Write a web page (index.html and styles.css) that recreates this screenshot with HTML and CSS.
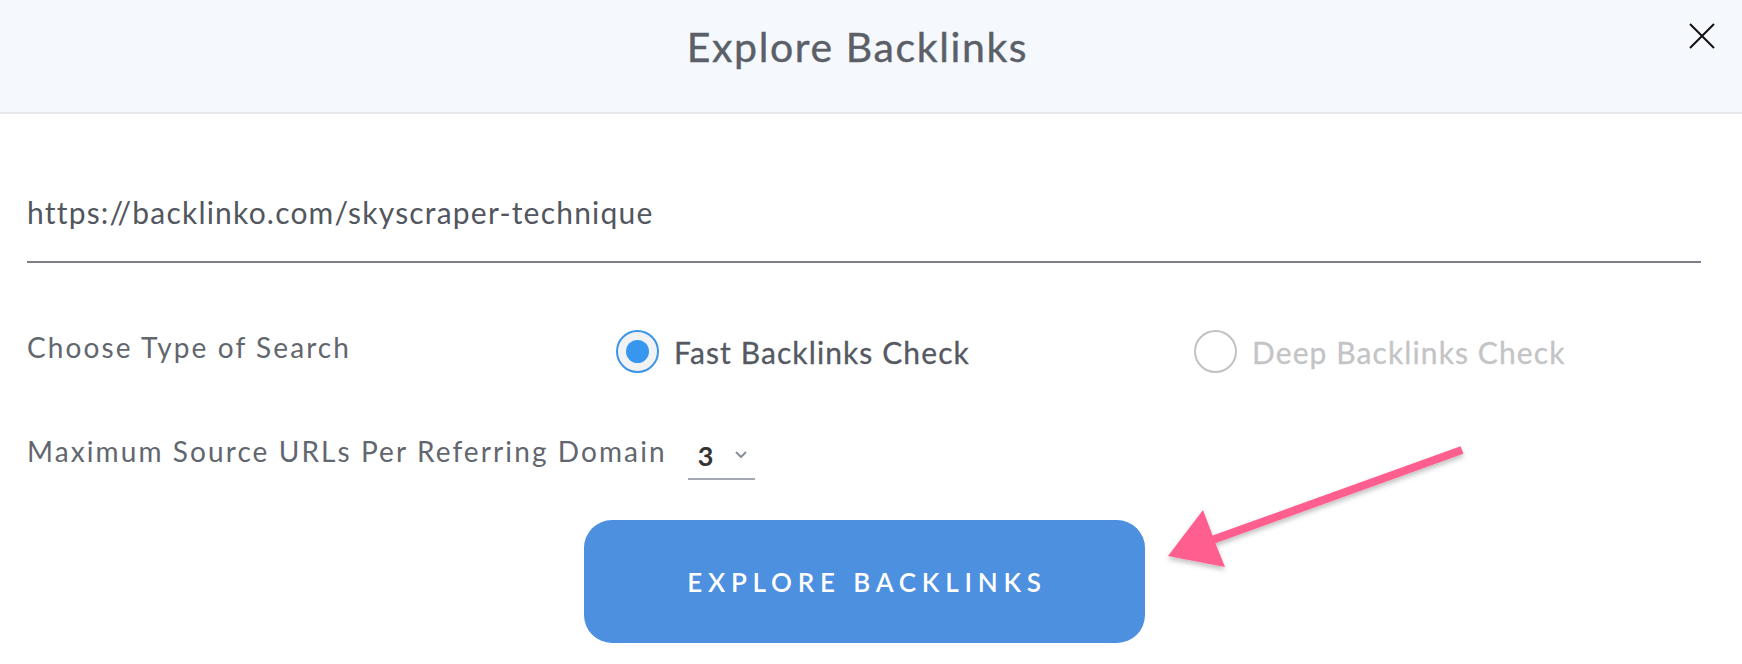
FILE: index.html
```html
<!DOCTYPE html>
<html lang="en">
<head>
<meta charset="UTF-8">
<meta name="viewport" content="width=device-width, initial-scale=1.0">
<link rel="stylesheet" href="styles.css">
</head>
<body>

<div class="modal">
  <!-- Header -->
  <div class="modal-header">
    <span></span>
    <h1 class="modal-title">Explore Backlinks</h1>
    <button class="close-btn" aria-label="Close">
      <svg width="26" height="26" viewBox="0 0 26 26"><path d="M1 1 L25 25 M25 1 L1 25" stroke="#111" stroke-width="2" fill="none"/></svg>
    </button>
  </div>

  <div class="modal-body">
    <div class="url-field">https://backlinko.com/skyscraper-technique</div>

    <div class="search-type">
      <span class="label">Choose Type of Search</span>
      <label class="radio checked"><span class="radio-circle"></span>Fast Backlinks Check</label>
      <label class="radio disabled"><span class="radio-circle"></span>Deep Backlinks Check</label>
    </div>

    <div class="max-urls">
      <span class="label">Maximum Source URLs Per Referring Domain</span>
      <div class="select">
        <span class="select-value">3</span>
        <svg width="12" height="8" viewBox="0 0 12 8"><path d="M1 1 L6 6 L11 1" stroke="#8a8f9a" stroke-width="2" fill="none"/></svg>
      </div>
    </div>

    <div class="actions">
      <button class="explore-btn">EXPLORE BACKLINKS</button>
    </div>
  </div>

  <!-- annotation arrow -->
  <svg class="arrow" width="330" height="160" viewBox="0 0 330 160">
    <defs>
      <filter id="shadow" x="-10%" y="-10%" width="120%" height="130%">
        <feDropShadow dx="0" dy="3" stdDeviation="2.5" flood-color="#000" flood-opacity="0.25"/>
      </filter>
    </defs>
    <polygon filter="url(#shadow)" fill="#ff5f8f" points="310.6,16.2 62.6,105.6 53,80 18,126 75,137 65.4,113.2 313.4,23.8"/>
  </svg>
</div>

</body>
</html>
```

FILE: styles.css
```css
body {
  margin: 0;
  background: #fff;
  font-family: Lato, "Open Sans", sans-serif;
}
.modal {
  position: relative;
  width: 1742px;
  height: 664px;
  overflow: hidden;
}
.modal-header {
  height: 112px;
  background-color: #f5f8fd;
  border-bottom: 2px solid #e5e7ea;
  display: grid;
  grid-template-columns: 1fr auto 1fr;
  align-items: center;
  padding-right: 27px;
}
.modal-title {
  margin: 0;
  padding-bottom: 19px;
  font-size: 41px;
  font-weight: 400;
  -webkit-text-stroke: 0.4px #5b5f68;
  color: #5b5f68;
  letter-spacing: 1.6px;
}
.close-btn {
  justify-self: end;
  align-self: start;
  margin-top: 23px;
  background: none;
  border: none;
  padding: 0;
  width: 26px;
  height: 26px;
  cursor: pointer;
}
.modal-body {
  padding: 0 41px 0 27px;
}
.url-field {
  margin-top: 80px;
  padding-bottom: 31px;
  border-bottom: 2px solid #7d808b;
  font-size: 30px;
  letter-spacing: 1.2px;
  color: #52565e;
  line-height: 36px;
}
.label {
  font-size: 28px;
  letter-spacing: 2.1px;
  color: #62666e;
}
.search-type {
  display: grid;
  grid-template-columns: 589px 578px auto;
  align-items: center;
  margin-top: 67px;
}
.search-type .label {
  margin-top: -10px;
}
.radio {
  display: flex;
  align-items: center;
  gap: 15px;
  font-size: 30px;
  font-weight: 400;
  -webkit-text-stroke: 0.3px #555962;
  letter-spacing: 1.1px;
  color: #555962;
}
.radio-circle {
  width: 39px;
  height: 39px;
  border-radius: 50%;
  border: 2px solid #c2c2c2;
  box-sizing: content-box;
  display: flex;
  align-items: center;
  justify-content: center;
}
.radio.checked .radio-circle {
  border-color: #3d95ea;
  background: #f1f2f4;
}
.radio.checked .radio-circle::after {
  content: "";
  width: 23px;
  height: 23px;
  border-radius: 50%;
  background: #3797ef;
}
.radio.disabled {
  color: #c4c4c6;
  -webkit-text-stroke: 0.3px #c4c4c6;
}
.max-urls {
  display: flex;
  align-items: center;
  margin-top: 49px;
}
.select {
  margin-left: 21px;
  width: 67px;
  height: 48px;
  border-bottom: 2px solid #a3a8b4;
  display: flex;
  align-items: center;
  justify-content: space-between;
  padding: 0 8px 0 10px;
  box-sizing: border-box;
  margin-top: 10px;
}
.select-value {
  font-size: 27px;
  font-weight: 700;
  color: #333;
}
.actions {
  display: flex;
  justify-content: center;
  margin-top: 40px;
}
.explore-btn {
  width: 561px;
  height: 123px;
  border: none;
  border-radius: 28px;
  background-color: #4d90e0;
  color: #fff;
  font-family: Lato, "Open Sans", sans-serif;
  font-size: 26px;
  font-weight: 600;
  letter-spacing: 5.8px;
  padding-left: 12px;
  cursor: pointer;
}
.arrow {
  position: absolute;
  left: 1150px;
  top: 430px;
}
```
